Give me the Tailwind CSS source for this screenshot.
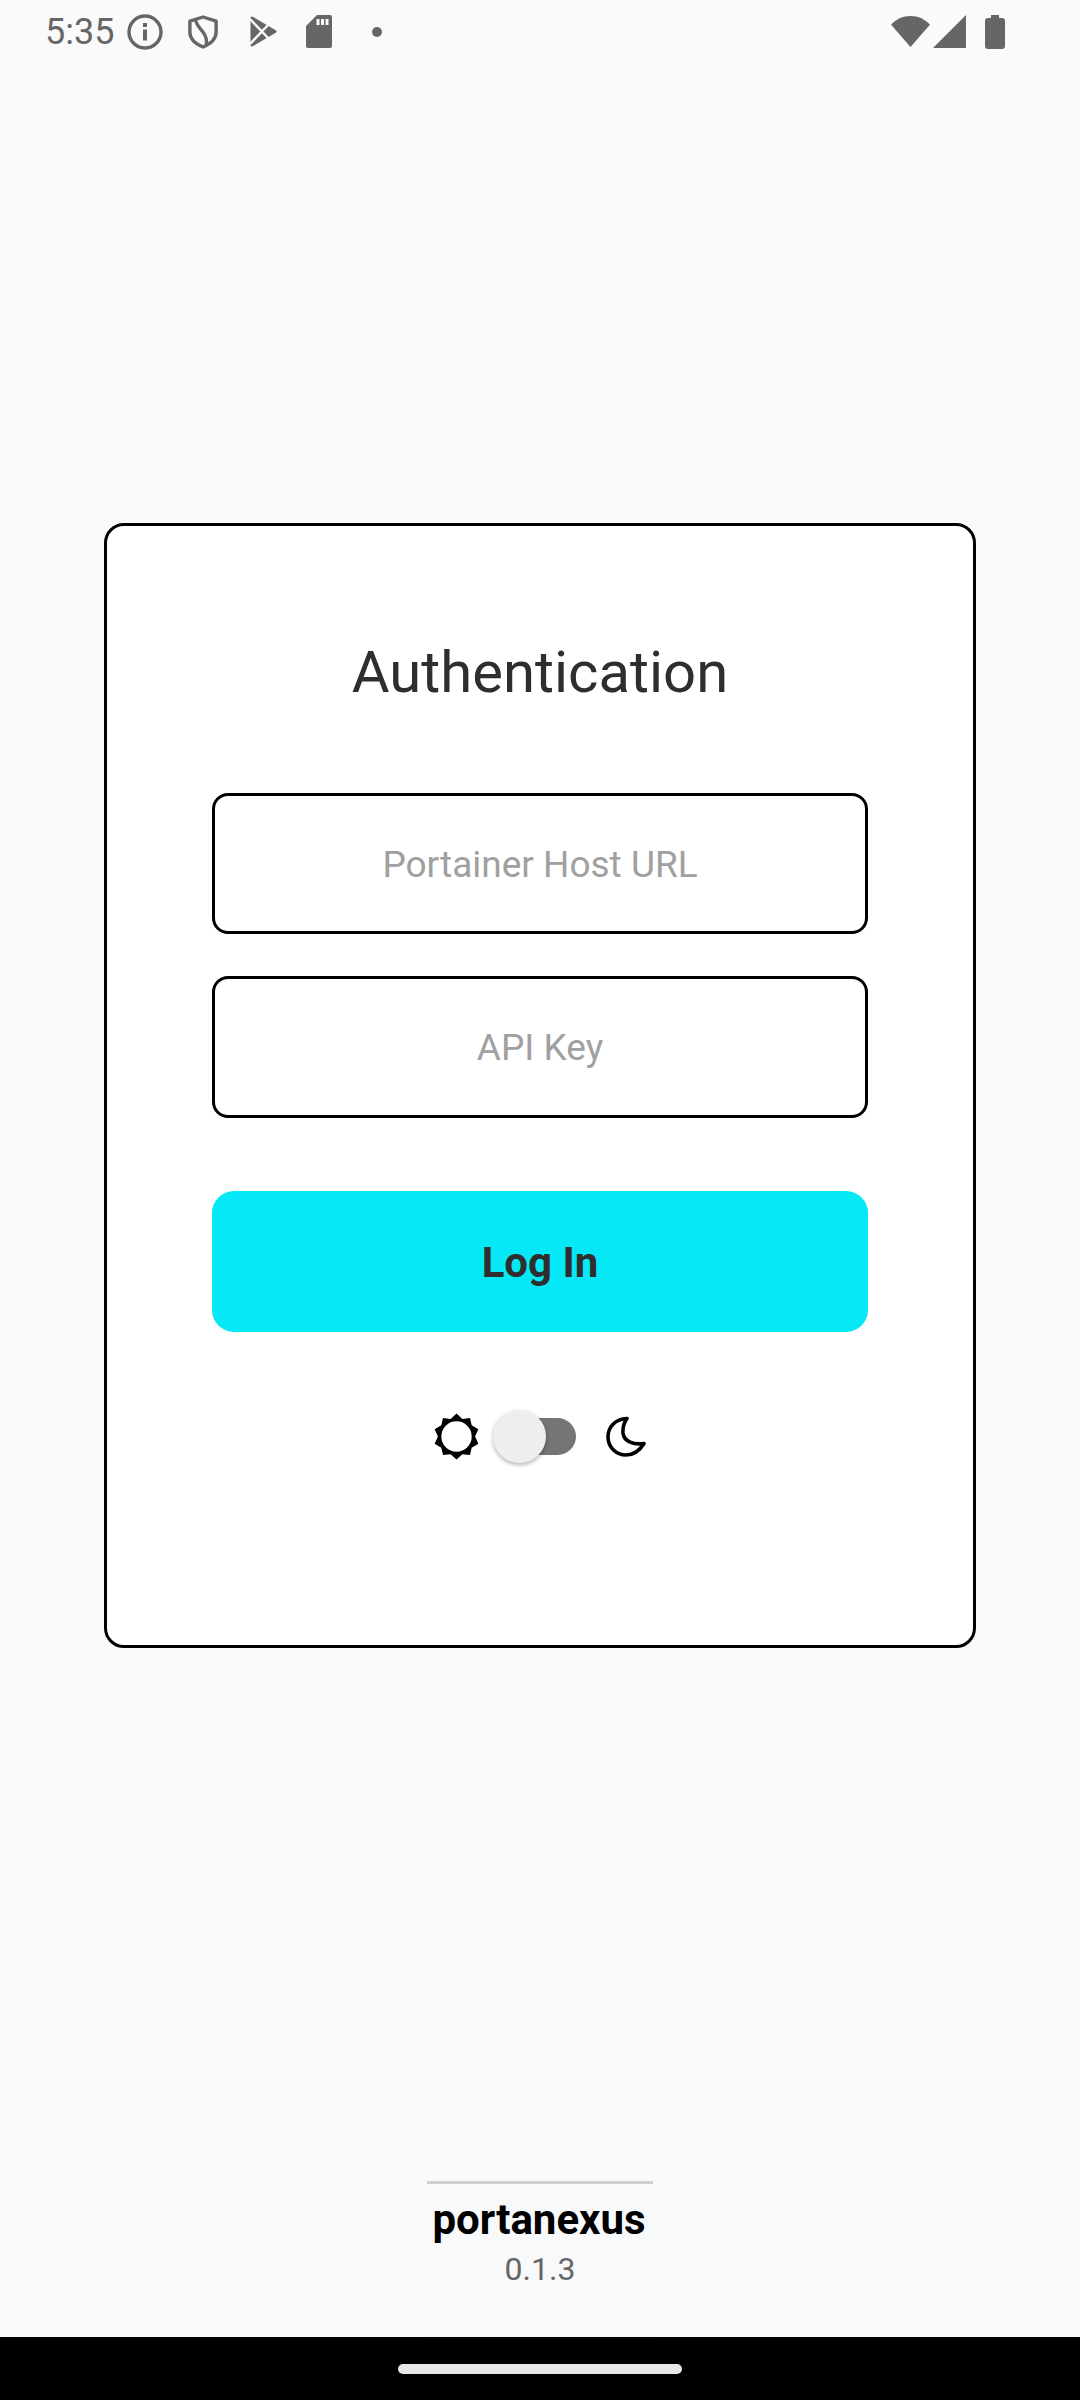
<!DOCTYPE html>
<html lang="en">
<head>
  <meta charset="utf-8"/>
  <meta name="viewport" content="width=device-width, initial-scale=1.0"/>
  <title>portanexus</title>
  <script src="https://cdn.jsdelivr.net/npm/@tailwindcss/browser@4"></script>
</head>
<body class="bg-[#fafafa] font-['Roboto',sans-serif]">
<div class="w-[1080px] h-[2400px] flex flex-col overflow-hidden">

  <!-- Status bar -->
  <div class="h-[63px] flex items-center justify-between text-[#666666] pl-[45px] pr-[75px] shrink-0">
    <div class="flex items-center">
      <span class="text-[36px] leading-none w-[68px] whitespace-nowrap">5:35</span>
      <svg class="ml-[14px]" width="36" height="36" viewBox="0 0 36 36" fill="none"><circle cx="18" cy="18" r="16" stroke="#666" stroke-width="3.400"/><rect x="16" y="15.500" width="4" height="11" fill="#666"/><rect x="16" y="9" width="4" height="4" fill="#666"/></svg>
      <svg class="ml-[25px]" width="30" height="36" viewBox="0 0 32 36" fill="none"><path d="M16 2 30 6.500V18c0 7.500-5.500 12.500-14 16C7.500 30.500 2 25.500 2 18V6.500z" stroke="#666" stroke-width="3.600" stroke-linejoin="round"/><path d="M8 5c1 6 5 9 8 13s4.500 8 3.500 14" stroke="#666" stroke-width="3.600"/></svg>
      <svg class="ml-[32px]" width="27" height="31" viewBox="0 0 27 31"><path d="M2 2 25 15.500 2 29z" fill="#666" stroke="#666" stroke-width="3" stroke-linejoin="round"/><path d="M0 3 19 23M0 28 19 8" stroke="#fafafa" stroke-width="2.500" fill="none"/></svg>
      <svg class="ml-[29px]" width="26" height="33" viewBox="0 0 26 33"><path d="M11 0h13a2 2 0 0 1 2 2v29a2 2 0 0 1-2 2H2a2 2 0 0 1-2-2V11z" fill="#666"/><rect x="10.500" y="4" width="3" height="6" fill="#fafafa"/><rect x="15" y="4" width="3" height="6" fill="#fafafa"/><rect x="19.500" y="4" width="3" height="6" fill="#fafafa"/></svg>
      <div class="ml-[40px] w-[10px] h-[10px] rounded-full bg-[#666666]"></div>
    </div>
    <div class="flex items-center">
      <svg width="39" height="33" viewBox="0 0 40 34"><path d="M0 10C5 4.500 12 1 20 1s15 3.500 20 9L20 33z" fill="#666"/></svg>
      <svg class="ml-[3px]" width="33" height="33" viewBox="0 0 33 33"><path d="M33 0v33H0z" fill="#666"/></svg>
      <svg class="ml-[19px]" width="20" height="34" viewBox="0 0 20 34"><path d="M6 0h8v3h3a3 3 0 0 1 3 3v25a3 3 0 0 1-3 3H3a3 3 0 0 1-3-3V6a3 3 0 0 1 3-3h3z" fill="#666"/></svg>
    </div>
  </div>

  <!-- Login card -->
  <div class="flex-1 flex flex-col items-center pt-[460px]">
    <div class="w-[872px] h-[1125px] bg-white border-[3px] border-black rounded-[20px] flex flex-col items-center pt-[112px]">
      <h1 class="text-[58px] leading-[68px] text-[#2e2e2e]">Authentication</h1>
      <div class="w-[656px] mt-[87px] flex flex-col">
        <div class="h-[141px] pt-[2px] border-[3px] border-black rounded-[16px] flex items-center justify-center text-[37px] text-[#a0a0a0]">Portainer Host URL</div>
        <div class="h-[142px] pt-[2px] mt-[42px] border-[3px] border-black rounded-[16px] flex items-center justify-center text-[37px] text-[#a0a0a0]">API Key</div>
        <button class="h-[141px] pt-[2px] mt-[73px] bg-[#07e8f6] rounded-[22px] text-[42px] font-bold text-[#2e2e2e]">Log In</button>
      </div>
      <!-- Theme switch -->
      <div class="mt-[81px] -ml-[2px] flex items-center">
        <svg width="47" height="47" viewBox="0 0 48 48"><path d="M24 .5 30 6 37.800 5 39.500 12.500 46.300 16.700 43 24 46.300 31.300 39.500 35.500 37.800 43 30 42 24 47.500 18 42 10.200 43 8.500 35.500 1.700 31.300 5 24 1.700 16.700 8.500 12.500 10.200 5 18 6z" fill="#000"/><circle cx="24" cy="24" r="15.500" fill="#fff"/></svg>
        <div class="relative ml-[13px] w-[83px] h-[37px]">
          <div class="absolute left-[22px] top-0 w-[61px] h-[37px] rounded-full bg-[#757575]"></div>
          <div class="absolute left-0 top-[-8px] w-[53px] h-[53px] rounded-full bg-[#eeeeee] shadow-[0_2px_4px_rgba(0,0,0,0.3)]"></div>
        </div>
        <svg class="ml-[30px]" width="40" height="41" viewBox="0 0 40 41" fill="none"><path d="M21 2.500C9 3 2 11 2 21c0 10 8 18 18 18 8 0 14-5 18-11.500C28 29 18 26 17 17c-.5-6 1.500-11 4-14.500z" stroke="#000" stroke-width="3.600" stroke-linejoin="round"/></svg>
      </div>
    </div>
  </div>

  <!-- Footer -->
  <div class="w-[226px] mx-auto h-[156px] bg-[#f8f9fb] border-t-[3px] border-[#d0d0d0] flex flex-col items-center shrink-0">
    <div class="mt-[13px] -ml-[2px] text-[42px] leading-[46px] font-bold text-black whitespace-nowrap">portanexus</div>
    <div class="mt-[8px] text-[32px] leading-[36px] text-[#666666]">0.1.3</div>
  </div>

  <!-- Navigation bar -->
  <div class="h-[63px] bg-black flex justify-center pt-[27px] shrink-0">
    <div class="w-[284px] h-[10px] rounded-full bg-[#e8e8e8]"></div>
  </div>
</div>
</body>
</html>
